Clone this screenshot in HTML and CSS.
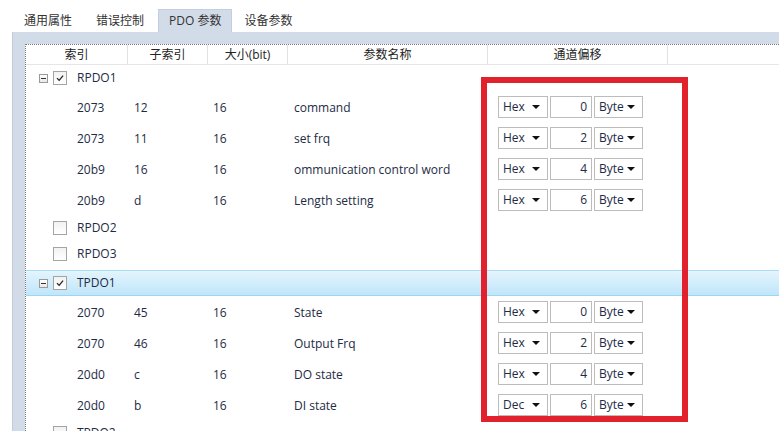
FILE: index.html
```html
<!DOCTYPE html>
<html lang="zh-CN">
<head>
    <meta charset="UTF-8">
    <title>PDO 参数</title>
    <link rel="stylesheet" href="styles.css">
</head>
<body>
    <div class="tabs">
        <div class="tab">通用属性</div>
        <div class="tab">错误控制</div>
        <div class="tab active">PDO 参数</div>
        <div class="tab">设备参数</div>
    </div>

    <div class="panel">
        <div class="list">
            <div class="row head">
                <div class="th">索引</div>
                <div class="th">子索引</div>
                <div class="th">大小(bit)</div>
                <div class="th">参数名称</div>
                <div class="th">通道偏移</div>
                <div class="th last"></div>
            </div>

            <!-- RPDO -->
            <div class="group">
                <span class="expander"></span>
                <span class="check checked"><svg viewBox="0 0 14 14"><path d="M3.5 7.2 L6 9.8 L10.6 4.2"/></svg></span>
                <span class="group-name">RPDO1</span>
            </div>
            <div class="row">
                <div class="td idx">2073</div><div class="td sub">12</div><div class="td size">16</div>
                <div class="td name">command</div>
                <div class="td offset">
                    <div class="combo fmt">Hex<i></i></div><div class="num">0</div><div class="combo unit">Byte<i></i></div>
                </div>
            </div>
            <div class="row">
                <div class="td idx">2073</div><div class="td sub">11</div><div class="td size">16</div>
                <div class="td name">set frq</div>
                <div class="td offset">
                    <div class="combo fmt">Hex<i></i></div><div class="num">2</div><div class="combo unit">Byte<i></i></div>
                </div>
            </div>
            <div class="row">
                <div class="td idx">20b9</div><div class="td sub">16</div><div class="td size">16</div>
                <div class="td name">ommunication control word</div>
                <div class="td offset">
                    <div class="combo fmt">Hex<i></i></div><div class="num">4</div><div class="combo unit">Byte<i></i></div>
                </div>
            </div>
            <div class="row">
                <div class="td idx">20b9</div><div class="td sub">d</div><div class="td size">16</div>
                <div class="td name">Length setting</div>
                <div class="td offset">
                    <div class="combo fmt">Hex<i></i></div><div class="num">6</div><div class="combo unit">Byte<i></i></div>
                </div>
            </div>
            <div class="group">
                <span class="check"></span>
                <span class="group-name">RPDO2</span>
            </div>
            <div class="group">
                <span class="check"></span>
                <span class="group-name">RPDO3</span>
            </div>

            <!-- TPDO -->
            <div class="group selected">
                <span class="expander"></span>
                <span class="check checked"><svg viewBox="0 0 14 14"><path d="M3.5 7.2 L6 9.8 L10.6 4.2"/></svg></span>
                <span class="group-name">TPDO1</span>
            </div>
            <div class="row">
                <div class="td idx">2070</div><div class="td sub">45</div><div class="td size">16</div>
                <div class="td name">State</div>
                <div class="td offset">
                    <div class="combo fmt">Hex<i></i></div><div class="num">0</div><div class="combo unit">Byte<i></i></div>
                </div>
            </div>
            <div class="row">
                <div class="td idx">2070</div><div class="td sub">46</div><div class="td size">16</div>
                <div class="td name">Output Frq</div>
                <div class="td offset">
                    <div class="combo fmt">Hex<i></i></div><div class="num">2</div><div class="combo unit">Byte<i></i></div>
                </div>
            </div>
            <div class="row">
                <div class="td idx">20d0</div><div class="td sub">c</div><div class="td size">16</div>
                <div class="td name">DO state</div>
                <div class="td offset">
                    <div class="combo fmt">Hex<i></i></div><div class="num">4</div><div class="combo unit">Byte<i></i></div>
                </div>
            </div>
            <div class="row">
                <div class="td idx">20d0</div><div class="td sub">b</div><div class="td size">16</div>
                <div class="td name">DI state</div>
                <div class="td offset">
                    <div class="combo fmt">Dec<i></i></div><div class="num">6</div><div class="combo unit">Byte<i></i></div>
                </div>
            </div>
            <div class="group">
                <span class="check"></span>
                <span class="group-name">TPDO2</span>
            </div>
        </div>
    </div>

    <!-- red annotation round the offset column -->
    <div class="callout"></div>
</body>
</html>
```

FILE: styles.css
```css
* {
    box-sizing: border-box;
    margin: 0;
    padding: 0;
}

html, body {
    height: 100%;
    overflow: hidden;
}

body {
    font-family: 'Open Sans', 'Noto Sans CJK SC', sans-serif;
    font-size: 12px;
    color: #1e2b45;
    background: #fff;
}

/* tab strip */
.tabs {
    display: flex;
    height: 32px;
    padding: 9px 0 0 12px;
}

.tab {
    height: 23px;
    line-height: 23px;
    padding: 0 12px;
    color: #333;
}

.tab.active {
    background: #d2dbe8;
    border: 1px solid #c4cede;
    border-bottom: none;
    padding: 0 10px;
    margin-left: 2px;
    line-height: 21px;
}

/* panel frame */
.panel {
    margin-left: 12px;
    height: calc(100% - 32px);
    background: #d2dbe8;
    border-left: 1px solid #c2ccdc;
    padding: 12px 0 0 12px;
}

.list {
    height: 100%;
    background: #fff;
    border-left: 1px dotted #7a7a7a;
    border-top: 1px dotted #7a7a7a;
    overflow: hidden;
}

/* grid rows */
.row {
    display: grid;
    grid-template-columns: 102px 80px 80px 200px 180px 1fr;
    height: 31px;
    align-items: center;
    padding-top: 1px;
}

.row.head {
    height: 20px;
    padding-top: 0;
    border-bottom: 1px solid #e6e6e6;
    color: #222;
    align-items: stretch;
}

.th {
    text-align: center;
    line-height: 20px;
    border-right: 1px solid #e2e2e2;
}

.th.last {
    border-right: none;
}

.td {
    white-space: nowrap;
}

.idx { padding-left: 51px; }
.sub { padding-left: 6px; }
.size { padding-left: 5px; }
.name { padding-left: 6px; }

.offset {
    display: flex;
    gap: 2px;
    padding-left: 10px;
}

.combo, .num {
    height: 22px;
    line-height: 20px;
    border: 1px solid #bcbcbc;
    background: #fff;
    position: relative;
}

.combo {
    padding-left: 4px;
}

.combo i {
    position: absolute;
    top: 8px;
    right: 7px;
    border-left: 4px solid transparent;
    border-right: 4px solid transparent;
    border-top: 4px solid #111;
}

.fmt { width: 50px; }
.unit { width: 49px; }

.num {
    width: 42px;
    text-align: right;
    padding-right: 4px;
}

/* tree group rows */
.group {
    display: flex;
    align-items: center;
    height: 26px;
    padding-left: 27px;
}

.expander {
    width: 9px;
    height: 9px;
    border: 1px solid #9a9a9a;
    background: linear-gradient(#fff, #e8e8e8);
    position: relative;
    margin-left: -14px;
    margin-right: 5px;
}

.expander::after {
    content: "";
    position: absolute;
    left: 1px;
    top: 3px;
    width: 5px;
    height: 1px;
    background: #333;
}

.check {
    width: 14px;
    height: 14px;
    border: 1px solid #a4a4a4;
    background: linear-gradient(#f2f2f2, #fff);
}

.check svg {
    display: block;
    width: 12px;
    height: 12px;
}

.check path {
    fill: none;
    stroke: #222;
    stroke-width: 1.5;
}

.group-name {
    margin-left: 10px;
    margin-top: -2px;
}

.group.selected {
    margin-top: 3px;
    background: linear-gradient(#e4f4fd, #c0e6fa);
    border-top: 1px solid #a9dcf5;
    border-bottom: 1px solid #9fd5f2;
}

/* annotation box */
.callout {
    position: absolute;
    left: 481px;
    top: 77px;
    width: 207px;
    height: 345px;
    border: 6px solid #e1222c;
}
```
